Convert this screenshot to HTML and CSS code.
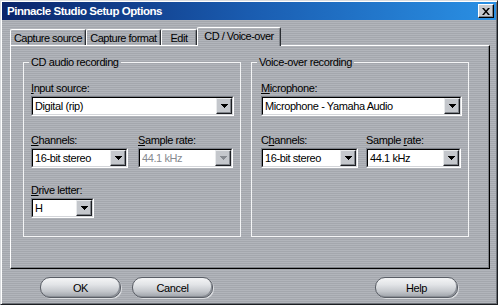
FILE: index.html
```html
<!DOCTYPE html>
<html>
<head>
<meta charset="utf-8">
<title>Pinnacle Studio Setup Options</title>
<link rel="stylesheet" href="styles.css">
</head>
<body>
<div class="window tex">
  <div class="titlebar">
    <span class="title">Pinnacle Studio Setup Options</span>
    <span class="close"><svg width="8" height="7" viewBox="0 0 8 7"><path d="M0 0h2l2 2.4 2-2.4h2l-3 3.5 3 3.5h-2l-2-2.4-2 2.4h-2l3-3.5z" fill="#000"/></svg></span>
  </div>
  <div class="main">
    <div class="tabs">
      <div class="tab t-src">Capture source</div>
      <div class="tab t-fmt">Capture format</div>
      <div class="tab t-edit">Edit</div>
      <div class="tab t-cd active tex">CD / Voice-over</div>
    </div>
    <div class="panel tex">
      <fieldset class="group">
        <legend class="tex">CD audio recording</legend>
        <div class="gbody gbody-left">
          <div class="field">
            <div class="label"><u>I</u>nput source:</div>
            <div class="combo w-wide"><div class="combo-in"><span class="val">Digital (rip)</span><span class="drop"><svg width="7" height="4" viewBox="0 0 7 4"><path d="M0 0h7v1h-1v1h-1v1h-1v1h-1v-1h-1v-1h-1v-1h-1z"/></svg></span></div></div>
          </div>
          <div class="pair">
            <div class="field">
              <div class="label"><u>C</u>hannels:</div>
              <div class="combo w-ch"><div class="combo-in"><span class="val">16-bit stereo</span><span class="drop"><svg width="7" height="4" viewBox="0 0 7 4"><path d="M0 0h7v1h-1v1h-1v1h-1v1h-1v-1h-1v-1h-1v-1h-1z"/></svg></span></div></div>
            </div>
            <div class="field">
              <div class="label"><u>S</u>ample rate:</div>
              <div class="combo w-sr disabled"><div class="combo-in tex"><span class="val">44.1 kHz</span><span class="drop"><svg width="7" height="4" viewBox="0 0 7 4"><path d="M0 0h7v1h-1v1h-1v1h-1v1h-1v-1h-1v-1h-1v-1h-1z"/></svg></span></div></div>
            </div>
          </div>
          <div class="field field-last">
            <div class="label"><u>D</u>rive letter:</div>
            <div class="combo w-drive"><div class="combo-in"><span class="val">H</span><span class="drop"><svg width="7" height="4" viewBox="0 0 7 4"><path d="M0 0h7v1h-1v1h-1v1h-1v1h-1v-1h-1v-1h-1v-1h-1z"/></svg></span></div></div>
          </div>
        </div>
      </fieldset>
      <fieldset class="group">
        <legend class="tex">Voice-over recording</legend>
        <div class="gbody gbody-right">
          <div class="field">
            <div class="label"><u>M</u>icrophone:</div>
            <div class="combo w-mic"><div class="combo-in"><span class="val">Microphone - Yamaha Audio</span><span class="drop"><svg width="7" height="4" viewBox="0 0 7 4"><path d="M0 0h7v1h-1v1h-1v1h-1v1h-1v-1h-1v-1h-1v-1h-1z"/></svg></span></div></div>
          </div>
          <div class="pair pair-right">
            <div class="field">
              <div class="label">C<u>h</u>annels:</div>
              <div class="combo w-ch"><div class="combo-in"><span class="val">16-bit stereo</span><span class="drop"><svg width="7" height="4" viewBox="0 0 7 4"><path d="M0 0h7v1h-1v1h-1v1h-1v1h-1v-1h-1v-1h-1v-1h-1z"/></svg></span></div></div>
            </div>
            <div class="field">
              <div class="label">Sample <u>r</u>ate:</div>
              <div class="combo w-sr"><div class="combo-in"><span class="val">44.1 kHz</span><span class="drop"><svg width="7" height="4" viewBox="0 0 7 4"><path d="M0 0h7v1h-1v1h-1v1h-1v1h-1v-1h-1v-1h-1v-1h-1z"/></svg></span></div></div>
            </div>
          </div>
        </div>
      </fieldset>
    </div>
    <div class="buttons">
      <button class="pill">OK</button>
      <button class="pill pill-cancel">Cancel</button>
      <button class="pill pill-help">Help</button>
    </div>
  </div>
</div>
</body>
</html>
```
FILE: styles.css
```css
* { box-sizing: border-box; }
html, body { margin: 0; padding: 0; }
body {
  width: 498px;
  height: 305px;
  overflow: hidden;
  font-family: "Liberation Sans", Arial, sans-serif;
  font-size: 11px;
  line-height: 13px;
  letter-spacing: -0.4px;
  color: #000;
  background: #a9acb2;
}
.tex {
  background: repeating-linear-gradient(to bottom, #b2b5bb 0, #b2b5bb 1px, #a4a7ad 1px, #a4a7ad 2px) fixed;
}
.window {
  height: 305px;
  display: flex;
  flex-direction: column;
  border: 1px solid;
  border-color: #dadcdf #1c1e22 #1c1e22 #dadcdf;
  box-shadow: inset 1px 1px 0 #fff, inset -1px -1px 0 #6c7076;
  padding: 1px;
}
.titlebar {
  height: 18px;
  flex: none;
  display: flex;
  align-items: center;
  justify-content: space-between;
  padding: 0 2px 0 5px;
  background: linear-gradient(to right, #0a246a, #1a5cb0 50%, #2a90e4);
  color: #fff;
  font-weight: bold;
  font-size: 11.5px;
  letter-spacing: -0.45px;
}
.close {
  width: 16px;
  height: 14px;
  background: #c6c9ce;
  border: 1px solid;
  border-color: #fff #000 #000 #fff;
  box-shadow: inset -1px -1px 0 #80848a;
  display: flex;
  align-items: center;
  justify-content: center;
}
.main {
  flex: 1;
  display: flex;
  flex-direction: column;
  padding: 7px 6px 0 8px;
}
.tabs {
  display: flex;
  align-items: flex-end;
  height: 19px;
  margin-bottom: -1px;
  position: relative;
  z-index: 1;
  letter-spacing: -0.5px;
}
.tab {
  height: 16px;
  margin-bottom: 1px;
  padding: 1px 0 0;
  line-height: 14px;
  text-align: center;
  white-space: nowrap;
  border: 1px solid;
  border-bottom: none;
  border-color: #fff #2a2d32 #fff #fff;
  border-radius: 2px 2px 0 0;
  box-shadow: inset -1px 0 0 #80848a;
}
.t-src { width: 76px; }
.t-fmt { width: 75px; }
.t-edit { width: 36px; }
.t-cd { width: 84px; }
.tab.active {
  height: 19px;
  margin-bottom: 0;
  line-height: 15px;
}
.panel {
  height: 224px;
  flex: none;
  border: 1px solid;
  border-color: #fff #000 #000 #fff;
  box-shadow: inset -1px -1px 0 #7c8086;
  padding: 10px 0 0 12px;
  display: flex;
  gap: 10px;
  align-items: flex-start;
}
.group {
  margin: 0;
  padding: 0;
  min-width: 0;
  width: 218px;
  height: 181px;
  border: 1px solid #f4f5f6;
}
.group legend {
  padding: 0 2px;
  margin-left: 5px;
  line-height: 12px;
}
.gbody {
  display: flex;
  flex-direction: column;
  padding-top: 14px;
}
.gbody-left { padding-left: 7px; }
.gbody-right { padding-left: 9px; }
.field {
  display: flex;
  flex-direction: column;
  gap: 1px;
}
.pair {
  display: flex;
  gap: 10px;
  margin-top: 18px;
}
.pair-right { gap: 8px; }
.field-last { margin-top: 16px; }
.label {
  height: 13px;
}
.combo {
  height: 20px;
  display: flex;
  border: 1px solid;
  border-color: #7c8088 #fff #fff #7c8088;
}
.combo-in {
  flex: 1;
  display: flex;
  min-width: 0;
  background: #fff;
  border: 1px solid;
  border-color: #000 #d4d6da #d4d6da #000;
}
.val {
  flex: 1;
  padding-left: 2px;
  line-height: 16px;
  white-space: nowrap;
  overflow: hidden;
}
.drop {
  width: 16px;
  flex: none;
  display: flex;
  align-items: center;
  justify-content: center;
  background: #c4c7cc;
  border: 1px solid;
  border-color: #e8eaec #1c1e22 #1c1e22 #e8eaec;
  box-shadow: inset -1px -1px 0 #80848a;
}
.drop svg path { fill: #000; }
.disabled .val { color: #868a90; }
.disabled .drop svg path { fill: #868a90; }
.w-wide { width: 203px; }
.w-mic { width: 201px; }
.w-ch { width: 97px; }
.w-sr { width: 95px; }
.w-drive { width: 63px; }
.buttons {
  display: flex;
  padding: 0 32px 0 30px;
  margin-top: 8px;
}
.pill {
  width: 81px;
  height: 21px;
  padding: 0;
  font: inherit;
  letter-spacing: inherit;
  color: #000;
  border: 1px solid #5a5e66;
  border-radius: 10px;
  background: linear-gradient(to bottom, #f4f5f6 0%, #e2e4e7 35%, #c4c7cc 70%, #9ea2a9 100%);
  box-shadow: 1px 1px 0 #dcdee1, inset -1px -1px 0 #8a8e95;
  text-align: center;
  line-height: 18px;
}
.pill-cancel { margin-left: 11px; }
.pill-help { margin-left: auto; width: 83px; }
```
